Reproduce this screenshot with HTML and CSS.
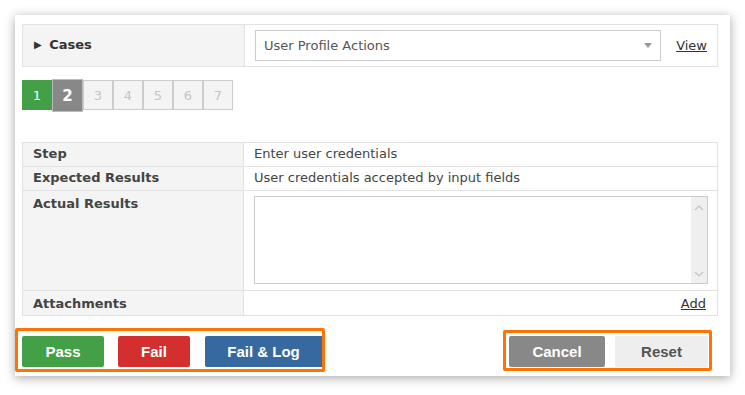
FILE: index.html
```html
<!DOCTYPE html>
<html lang="en">
<head>
  <meta charset="UTF-8">
  <title>Run Test Case</title>
  <link rel="stylesheet" href="styles.css">
</head>
<body>
  <div class="card">
    <table class="grid case-row">
      <tr>
        <th><span class="arrow">&#9654;</span> Cases</th>
        <td>
          <div class="case-pick">
            <div class="select">
              <span>User Profile Actions</span>
              <span class="caret"></span>
            </div>
            <a href="#" class="link">View</a>
          </div>
        </td>
      </tr>
    </table>

    <div class="pager">
      <span class="page done">1</span>
      <span class="page current">2</span>
      <span class="page">3</span>
      <span class="page">4</span>
      <span class="page">5</span>
      <span class="page">6</span>
      <span class="page">7</span>
    </div>

    <table class="grid steps">
      <tr>
        <th>Step</th>
        <td>Enter user credentials</td>
      </tr>
      <tr>
        <th>Expected Results</th>
        <td>User credentials accepted by input fields</td>
      </tr>
      <tr class="tall">
        <th>Actual Results</th>
        <td>
          <div class="textbox">
            <textarea></textarea>
            <div class="scroll">
              <svg width="10" height="6" viewBox="0 0 10 6"><path d="M1 5 L5 1 L9 5" fill="none" stroke="#c4c4c4" stroke-width="1.2"/></svg>
              <svg width="10" height="6" viewBox="0 0 10 6"><path d="M1 1 L5 5 L9 1" fill="none" stroke="#c4c4c4" stroke-width="1.2"/></svg>
            </div>
          </div>
        </td>
      </tr>
      <tr class="files">
        <th>Attachments</th>
        <td class="right"><a href="#" class="link">Add</a></td>
      </tr>
    </table>

    <div class="actions">
      <div class="group main">
        <button class="btn pass">Pass</button>
        <button class="btn fail">Fail</button>
        <button class="btn log">Fail &amp; Log</button>
      </div>
      <div class="group side">
        <button class="btn cancel">Cancel</button>
        <button class="btn reset">Reset</button>
      </div>
    </div>
  </div>
</body>
</html>
```

FILE: styles.css
```css
body {
  margin: 0;
  background: #fff;
  font-family: "DejaVu Sans", Verdana, sans-serif;
  font-size: 13px;
  color: #444;
}

.card {
  margin: 15px;
  width: 696px;
  padding: 9px 12px 4px 7px;
  background: #fff;
  box-shadow: 0 2px 10px rgba(0, 0, 0, 0.35);
}

.grid {
  width: 696px;
  border-collapse: collapse;
  table-layout: fixed;
}

.grid th,
.grid td {
  border: 1px solid #e2e2e2;
  text-align: left;
  vertical-align: top;
  padding: 4px 10px 4px 10px;
  line-height: 16px;
}

.grid th {
  width: 200px;
  background: #f4f4f4;
  color: #444;
  font-weight: bold;
}

.case-row th,
.case-row td {
  vertical-align: middle;
  height: 33px;
}

.case-row th {
  padding-left: 11px;
  color: #333;
}

.arrow {
  font-size: 10px;
  margin-right: 3px;
  color: #333;
  position: relative;
  top: -1px;
}

.case-pick {
  display: flex;
  align-items: center;
}

.select {
  width: 391px;
  height: 29px;
  border: 1px solid #ccc;
  display: flex;
  align-items: center;
  justify-content: space-between;
  padding: 0 8px 0 8px;
  color: #555;
}

.caret {
  width: 0;
  height: 0;
  border-left: 4px solid transparent;
  border-right: 4px solid transparent;
  border-top: 5px solid #999;
}

.link {
  color: #333;
  text-decoration: underline;
  margin-left: 15px;
}

.pager {
  display: flex;
  align-items: flex-start;
  margin: 13px 0 30px;
}

.page {
  width: 28px;
  height: 28px;
  border: 1px solid #ccc;
  background: #f4f4f4;
  color: #c4c4c4;
  font-size: 13px;
  display: flex;
  align-items: center;
  justify-content: center;
}

.page.done {
  background: #43a047;
  border-color: #43a047;
  color: #fff;
}

.page.current {
  width: 29px;
  background: #888;
  border-color: #bbb;
  color: #fff;
  font-weight: bold;
  font-size: 15px;
  height: 31px;
  margin-top: -1px;
}

.steps tr {
  height: 24px;
}

.steps th,
.steps td {
  padding-top: 3px;
  padding-bottom: 3px;
}

.steps tr.tall {
  height: 100px;
}

.steps tr.tall th,
.steps tr.tall td {
  padding-top: 5px;
  padding-bottom: 5px;
}

.steps tr.files {
  height: 25px;
}

.steps tr.files th,
.steps tr.files td {
  padding-top: 5px;
  padding-bottom: 2px;
}

.textbox {
  display: flex;
  height: 86px;
  border: 1px solid #ccc;
  margin-right: -1px;
}

.textbox textarea {
  flex: 1;
  border: none;
  resize: none;
  outline: none;
  padding: 4px;
  font-family: inherit;
}

.scroll {
  width: 16px;
  background: #efefef;
  display: flex;
  flex-direction: column;
  justify-content: space-between;
  align-items: center;
  padding: 8px 0 6px;
}

.right {
  text-align: right !important;
}

.right .link {
  margin-right: 1px;
}

.actions {
  display: flex;
  justify-content: space-between;
  align-items: flex-start;
  margin: 12px 6px 0 -7px;
}

.group {
  display: flex;
  border: 3px solid #ff7300;
  border-radius: 2px;
}

.group.main {
  padding: 5px 0 2px 4px;
}

.group.side {
  margin-top: 2px;
  padding: 3px 1px 1px 3px;
}

.btn {
  height: 31px;
  border: none;
  border-radius: 2px;
  font-family: "Liberation Sans", Arial, sans-serif;
  font-weight: bold;
  font-size: 15px;
  color: #fff;
  cursor: pointer;
}

.pass {
  width: 82px;
  background: #43a047;
}

.fail {
  width: 72px;
  margin-left: 14px;
  background: #d32f2f;
}

.log {
  width: 117px;
  margin-left: 15px;
  background: #36699f;
  border-radius: 2px 0 0 2px;
}

.cancel {
  width: 96px;
  background: #888;
}

.reset {
  width: 93px;
  margin-left: 10px;
  background: #eee;
  color: #555;
}
```
